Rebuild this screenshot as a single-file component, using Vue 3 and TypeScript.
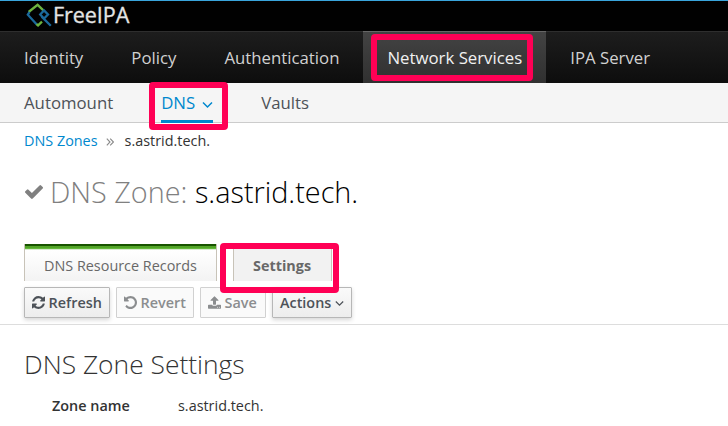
<script setup lang="ts">
interface NavItem {
  label: string
  active?: boolean
  menu?: boolean
  id: string
}

interface ActionButton {
  id: string
  label: string
  disabled?: boolean
  viewBox?: string
  icon?: string
}

const primary: NavItem[] = [
  { id: 'identity', label: 'Identity' },
  { id: 'policy', label: 'Policy' },
  { id: 'authentication', label: 'Authentication' },
  { id: 'network', label: 'Network Services', active: true },
  { id: 'server', label: 'IPA Server' },
]

const secondary: NavItem[] = [
  { id: 'automount', label: 'Automount' },
  { id: 'dns', label: 'DNS', active: true, menu: true },
  { id: 'vaults', label: 'Vaults' },
]

const buttons: ActionButton[] = [
  {
    id: 'refresh',
    label: 'Refresh',
    viewBox: '0 128 1536 1536',
    icon: 'M1511 1056q0 5-1 7-64 268-268 434.5t-478 166.5q-146 0-282.5-55t-243.5-157l-129 129q-19 19-45 19t-45-19-19-45v-448q0-26 19-45t45-19h448q26 0 45 19t19 45-19 45l-137 137q71 66 161 102t187 36q134 0 250-65t186-179q11-17 53-117 8-23 30-23h192q13 0 22.5 9.5t9.5 22.5zm25-800v448q0 26-19 45t-45 19h-448q-26 0-45-19t-19-45 19-45l138-138q-148-137-349-137-134 0-250 65t-186 179q-11 17-53 117-8 23-30 23h-199q-13 0-22.5-9.5t-9.5-22.5v-7q65-268 270-434.5t480-166.5q146 0 284 55.5t245 156.5l130-129q19-19 45-19t45 19 19 45z',
  },
  {
    id: 'revert',
    label: 'Revert',
    disabled: true,
    viewBox: '0 128 1536 1536',
    icon: 'M1536 896q0 156-61 298t-164 245-245 164-298 61q-172 0-327-72.5t-264-204.5q-7-10-6.5-22.5t8.5-20.5l137-138q10-9 25-9 16 2 23 12 73 95 179 147t225 52q104 0 198.5-40.5t163.5-109.5 109.5-163.5 40.5-198.5-40.5-198.5-109.5-163.5-163.5-109.5-198.5-40.5q-98 0-188 35.5t-160 101.5l137 138q31 30 14 69-17 40-59 40h-448q-26 0-45-19t-19-45v-448q0-42 40-59 39-17 69 14l130 129q107-101 244.5-156.5t284.5-55.5q156 0 298 61t245 164 164 245 61 298z',
  },
  {
    id: 'save',
    label: 'Save',
    disabled: true,
    viewBox: '0 64 1664 1600',
    icon: 'M1280 1472q0-26-19-45t-45-19-45 19-19 45 19 45 45 19 45-19 19-45zm256 0q0-26-19-45t-45-19-45 19-19 45 19 45 45 19 45-19 19-45zm128-224v320q0 40-28 68t-68 28h-1472q-40 0-68-28t-28-68v-320q0-40 28-68t68-28h427q21 56 70.5 92t110.5 36h256q61 0 110.5-36t70.5-92h427q40 0 68 28t28 68zm-325-648q-17 40-59 40h-256v448q0 26-19 45t-45 19h-256q-26 0-45-19t-19-45v-448h-256q-42 0-59-40-17-39 14-69l448-448q18-19 45-19t45 19l448 448q31 30 14 69z',
  },
  { id: 'actions', label: 'Actions' },
]
</script>

<template>
  <div class="page">
    <header class="brand">
      <svg class="logo" viewBox="0 0 26 25" fill="none" stroke-width="2.3">
        <path d="M2.6 9 11.6 1.8 17.4 7.4" stroke="#6db33f" />
        <path d="M3.6 9 1.8 11.7 11 21.8" stroke="#1b6a9c" />
        <path d="M10.4 21.2 12 22.4 16 18.6" stroke="#6db33f" />
        <path d="M18 7.4 22 11.5 18 15.6 14.2 11.5ZM15.6 13.6 24.8 22.8" stroke="#1b6a9c" />
      </svg>
      <span class="brand-name">FreeIPA</span>
    </header>

    <nav class="primary">
      <a v-for="item in primary" :key="item.id" :class="['primary-item', item.id, { active: item.active }]">
        <span>{{ item.label }}</span>
      </a>
    </nav>

    <nav class="secondary">
      <a v-for="item in secondary" :key="item.id" :class="['secondary-item', item.id, { active: item.active }]">
        <span>{{ item.label }}</span>
        <svg v-if="item.menu" class="chevron" viewBox="0 0 11 8"><path d="M1 1.5 5.5 6 10 1.5" /></svg>
      </a>
    </nav>

    <main>
      <div class="crumbs">
        <a>DNS Zones</a>
        <svg class="double" viewBox="0 0 8 8"><path d="M.8.7 4 4 .8 7.3M4.2.7 7.4 4 4.2 7.3" /></svg>
        <span>s.astrid.tech.</span>
      </div>

      <h1>
        <svg class="check" viewBox="121 334 1550 1188">
          <path d="M1671 566q0 40-28 68l-724 724-136 136q-28 28-68 28t-68-28l-136-136-362-362q-28-28-28-68t28-68l136-136q28-28 68-28t68 28l294 295 656-657q28-28 68-28t68 28l136 136q28 28 28 68z" />
        </svg>
        <span class="kind">DNS Zone:</span>
        <span class="zone">s.astrid.tech.</span>
      </h1>

      <div class="tabs">
        <a class="tab records"><span>DNS Resource Records</span></a>
        <a class="tab settings"><span>Settings</span></a>
      </div>

      <div class="toolbar">
        <button v-for="b in buttons" :key="b.id" :class="['btn', b.id]" :disabled="b.disabled">
          <svg v-if="b.icon" class="icon" :viewBox="b.viewBox"><path :d="b.icon" /></svg>
          <span>{{ b.label }}</span>
          <svg v-if="!b.icon" class="chevron" viewBox="0 0 11 8"><path d="M1 1.5 5.5 6 10 1.5" /></svg>
        </button>
      </div>

      <section>
        <h2><span>DNS Zone Settings</span></h2>
        <dl>
          <dt><span>Zone name</span></dt>
          <dd><span>s.astrid.tech.</span></dd>
        </dl>
      </section>
    </main>

    <div class="mark mark-network"></div>
    <div class="mark mark-dns"></div>
    <div class="mark mark-settings"></div>
  </div>
</template>

<style>
body {
  background: #fff;
  overflow: hidden;
}
</style>

<style scoped>
.page {
  position: relative;
  width: 728px;
  height: 426px;
  overflow: hidden;
  background: #fff;
  color: #333;
  font: 14.4px/20px "Open Sans", sans-serif;
  white-space: nowrap;
}
.page * {
  box-sizing: border-box;
}
.brand {
  display: flex;
  height: 31px;
  border-top: 1px solid #39a5dc;
  background: #010101;
  padding: 2px 0 0 26px;
}
.logo {
  width: 26px;
  height: 25px;
}
.brand-name {
  margin-left: 1px;
  color: #e4e4e4;
  font-size: 21.6px;
  line-height: 23px;
  font-weight: 400;
  letter-spacing: -0.1px;
  -webkit-text-stroke: 0.3px #e4e4e4;
}
.primary {
  display: flex;
  height: 52px;
  border-top: 1px solid #2e2e2e;
  background: linear-gradient(#1d1d1d, #0d0d0d);
}
.primary-item {
  height: 52px;
  margin-top: -1px;
  padding: 15px 24px 0;
  color: #d1d1d1;
  font-size: 16.8px;
  line-height: 24px;
}
.primary-item.active {
  border-top: 1px solid #666;
  padding-top: 14px;
  background: linear-gradient(#434343, #303030);
  color: #f1f1f1;
}
.secondary {
  display: flex;
  gap: 48px;
  height: 40px;
  padding: 0 24px;
  border-bottom: 1px solid #ccc;
  background: #f5f5f5;
}
.secondary-item {
  display: flex;
  height: 40px;
  padding-top: 8px;
  color: #4d5258;
  font-size: 16.8px;
  line-height: 24px;
}
.secondary-item.active {
  width: 52px;
  color: #0088ce;
  border-bottom: 3px solid #0088ce;
}
.chevron {
  width: 11px;
  height: 8px;
  fill: none;
  stroke: currentColor;
  stroke-width: 1.5;
}
.secondary .chevron {
  margin: 10px 0 0 7px;
}
.crumbs {
  display: flex;
  height: 36px;
  padding: 8px 24px 0;
}
.crumbs a {
  color: #0088ce;
}
.double {
  width: 8px;
  height: 8px;
  margin: 7px 11px 0 8px;
  fill: none;
  stroke: #8a8a8a;
  stroke-width: 1.1;
}
h1 {
  display: flex;
  height: 85px;
  margin: 0;
  padding: 13px 24px 0;
  font-size: 28.8px;
  font-weight: 300;
  line-height: 40px;
}
.check {
  width: 18px;
  height: 14px;
  margin: 13px 7px 0 1px;
  fill: #808080;
}
.kind {
  color: #808080;
}
.zone {
  margin-left: 7.5px;
  color: #000;
}
.tabs {
  display: flex;
  gap: 16px;
  height: 37px;
  padding-left: 24px;
  color: #686868;
}
.tab {
  border: 1px solid #c8c3b8;
  border-width: 0 1px;
}
.records {
  width: 193px;
  padding: 6px 19px 0;
  border-top: 0;
  background: linear-gradient(#185400 0 2px, #52a528 2px 4px, #65b83c 4px 5px, #d8ecd0 5px 6px, #fff 6px, #f3f3f3);
}
.records span,
.settings span {
  display: block;
  line-height: 31px;
}
.settings {
  width: 99px;
  height: 32px;
  margin-top: 5px;
  padding: 1px 19px 0;
  background: #f2f2f2;
  font-weight: 700;
}
.toolbar {
  display: flex;
  gap: 6px;
  height: 44px;
  padding: 6px 24px 0;
  border-bottom: 1px solid #ddd;
}
.btn {
  display: flex;
  width: 86px;
  height: 31px;
  padding: 0 0 0 7px;
  border: 1px solid #b7b7b7;
  border-radius: 1px;
  background: linear-gradient(#fafafa, #ededed);
  box-shadow: 0 2px 4px rgba(3, 3, 3, 0.16);
  color: #4d5258;
  font: 600 14.4px/29px "Open Sans", sans-serif;
}
.btn:disabled {
  border-color: #d1d1d1;
  background: #fafafa;
  box-shadow: none;
  color: #8b8d8f;
}
.revert {
  width: 78px;
}
.save {
  width: 66px;
}
.actions {
  width: 80px;
}
.icon {
  width: 13px;
  height: 13px;
  margin: 8px 3.6px 0 0;
  fill: currentColor;
}
.btn .chevron {
  width: 9px;
  height: 7px;
  margin: 12px 0 0 4px;
}
h2 {
  height: 62px;
  margin: 0;
  padding: 21px 24px 0;
  font-size: 26.4px;
  font-weight: 300;
  line-height: 36px;
}
dl {
  display: flex;
  margin: 0;
  padding: 9px 0 0 52px;
}
dt {
  width: 126px;
  font-weight: 600;
}
dd {
  margin: 0;
}
.mark {
  position: absolute;
  border: 6px solid #ff0055;
  border-radius: 4px;
}
.mark-network {
  left: 371px;
  top: 34px;
  width: 162px;
  height: 47px;
}
.mark-dns {
  left: 149px;
  top: 82px;
  width: 79px;
  height: 48px;
}
.mark-settings {
  left: 220px;
  top: 243px;
  width: 119px;
  height: 50px;
}
</style>
